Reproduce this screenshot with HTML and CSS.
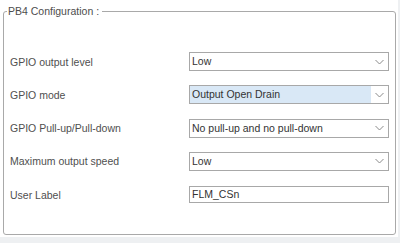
FILE: index.html
```html
<!DOCTYPE html>
<html>
<head>
<meta charset="utf-8">
<link rel="stylesheet" href="styles.css">
</head>
<body>
<div class="page">
  <fieldset class="group">
    <legend class="legend">PB4 Configuration :</legend>
    <div class="rows">
      <div class="row">
        <span class="lbl">GPIO output level</span>
        <div class="combo"><span class="val">Low</span><span class="arrow"><svg width="9" height="6" viewBox="0 0 9 6"><polyline points="0.5,1 4.5,5 8.5,1" fill="none" stroke="#8a8a8a" stroke-width="1"/></svg></span></div>
      </div>
      <div class="row">
        <span class="lbl">GPIO mode</span>
        <div class="combo"><span class="val sel">Output Open Drain</span><span class="arrow"><svg width="9" height="6" viewBox="0 0 9 6"><polyline points="0.5,1 4.5,5 8.5,1" fill="none" stroke="#8a8a8a" stroke-width="1"/></svg></span></div>
      </div>
      <div class="row">
        <span class="lbl">GPIO Pull-up/Pull-down</span>
        <div class="combo"><span class="val">No pull-up and no pull-down</span><span class="arrow"><svg width="9" height="6" viewBox="0 0 9 6"><polyline points="0.5,1 4.5,5 8.5,1" fill="none" stroke="#8a8a8a" stroke-width="1"/></svg></span></div>
      </div>
      <div class="row">
        <span class="lbl">Maximum output speed</span>
        <div class="combo"><span class="val">Low</span><span class="arrow"><svg width="9" height="6" viewBox="0 0 9 6"><polyline points="0.5,1 4.5,5 8.5,1" fill="none" stroke="#8a8a8a" stroke-width="1"/></svg></span></div>
      </div>
      <div class="row">
        <span class="lbl">User Label</span>
        <div class="text-field">FLM_CSn</div>
      </div>
    </div>
  </fieldset>
</div>
</body>
</html>
```
FILE: styles.css
```css
html, body {
  margin: 0;
  padding: 0;
}
body {
  background: #eef0f2;
  width: 400px;
  height: 243px;
  font-family: "Liberation Sans", Arial, sans-serif;
  font-size: 10.5px;
}
.page {
  width: 398px;
  height: 237px;
  box-sizing: border-box;
  background: #ffffff;
  padding: 5px 0 0 3px;
}
.group {
  width: 393px;
  height: 230px;
  box-sizing: border-box;
  margin: 0;
  border: 1px solid #a9a9a9;
  border-radius: 3px;
  padding: 35px 5px 0 6px;
}
.legend {
  margin-left: -3px;
  padding: 0 3px 0 1px;
  line-height: 12px;
  color: #4d4d4d;
}
.rows {
  display: flex;
  flex-direction: column;
  gap: 14.3px;
}
.row {
  display: flex;
  align-items: center;
  height: 19px;
}
.lbl {
  width: 179px;
  color: #4f4f4f;
}
.combo {
  width: 200px;
  height: 19px;
  box-sizing: border-box;
  border: 1px solid #a8a8a8;
  display: flex;
  background: #fff;
}
.val {
  flex: 1;
  padding-left: 2px;
  line-height: 17px;
  color: #333333;
}
.val.sel {
  background: #d9e8f6;
}
.arrow {
  width: 16px;
  display: flex;
  align-items: center;
  justify-content: center;
  padding-right: 1px;
}
.text-field {
  width: 200px;
  height: 17px;
  box-sizing: border-box;
  border: 1px solid #a8a8a8;
  padding-left: 2px;
  line-height: 15px;
  color: #333333;
}
```
